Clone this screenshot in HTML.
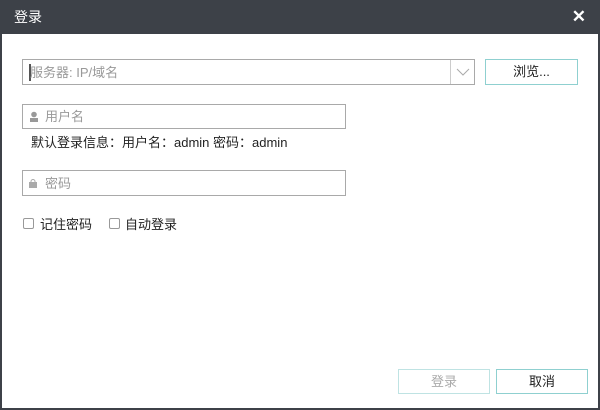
<!DOCTYPE html>
<html><head><meta charset="utf-8"><style>
*{margin:0;padding:0;box-sizing:border-box}
body{width:600px;height:410px;background:#fff;font-family:"Liberation Sans","Microsoft YaHei","Noto Sans CJK SC",sans-serif;font-size:13px;color:#222;position:relative;overflow:hidden}
.frame{position:absolute;left:0;top:0;width:600px;height:410px;border:1px solid #3d4148;border-width:0 2px 2px 2px}
.title{position:absolute;left:0;top:0;width:600px;height:34px;background:#3d4148;color:#fff;font-size:14px;line-height:34px;padding-left:14px}
.x{position:absolute;right:14px;top:0;color:#fff;font-size:17px;font-weight:bold;line-height:34px}
.box{position:absolute;border:1px solid #a9a9a9;background:#fff;color:#999;line-height:23px}
.btn{position:absolute;border:1px solid #8fd0d0;text-align:center;line-height:23px}
.cb{position:absolute;width:11px;height:11px;border:1px solid #999;border-radius:2px;top:218px}
.t{position:absolute;color:#222}
</style></head><body>
<div class="title">登录</div><div class="x">✕</div>
<div class="frame"></div>
<div class="box" style="left:22px;top:59px;width:453px;height:26px"><div style="position:absolute;left:6px;top:4px;width:2px;height:17px;background:#555"></div><span style="position:absolute;left:7px;top:1px">服务器: IP/域名</span>
<div style="position:absolute;right:0;top:0;width:24px;height:24px;border-left:1px solid #ccc"><svg width="24" height="24"><path d="M6 9 L12 15 L18 9" fill="none" stroke="#aaa" stroke-width="1"/></svg></div></div>
<div class="btn" style="left:485px;top:59px;width:93px;height:26px;line-height:24px">浏览...</div>
<div class="box" style="left:22px;top:104px;width:324px;height:25px"><svg style="position:absolute;left:6px;top:6px" width="10" height="12"><circle cx="5" cy="3.5" r="2.8" fill="#999"/><rect x="1" y="7" width="8" height="4" fill="#999"/></svg><span style="position:absolute;left:22px;top:0">用户名</span></div>
<div class="t" style="left:31px;top:134px;line-height:18px">默认登录信息：用户名：admin 密码：admin</div>
<div class="box" style="left:22px;top:170px;width:324px;height:26px"><svg style="position:absolute;left:6px;top:8px" width="8" height="9"><rect x="0" y="3" width="8" height="6" fill="#aaa"/><path d="M2 4V2.5a2 2 0 014 0V4" fill="none" stroke="#aaa"/></svg><span style="position:absolute;left:22px;top:1px">密码</span></div>
<div class="cb" style="left:23px"></div><div class="t" style="left:40px;top:214px">记住密码</div>
<div class="cb" style="left:109px"></div><div class="t" style="left:125px;top:214px">自动登录</div>
<div class="btn" style="left:398px;top:369px;width:92px;height:25px;color:#aaa;border-color:#bfe3e3">登录</div>
<div class="btn" style="left:496px;top:369px;width:92px;height:25px;color:#222">取消</div>
</body></html>
